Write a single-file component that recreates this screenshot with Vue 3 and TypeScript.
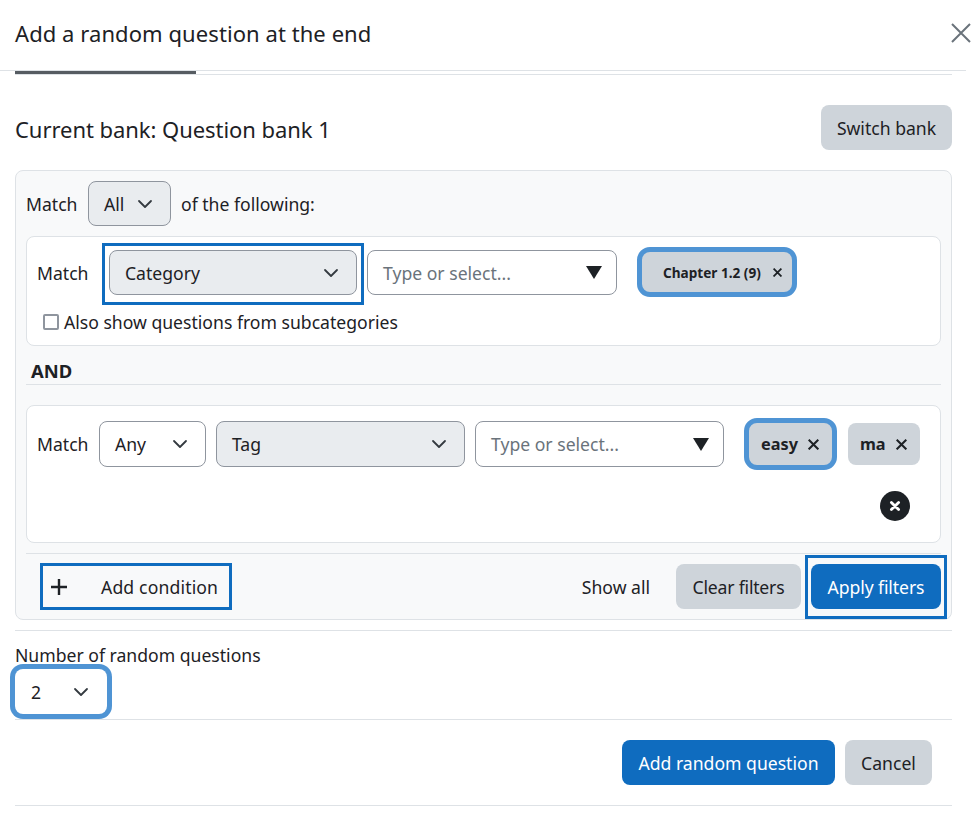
<script setup lang="ts">
const chevron = 'M2 5l6 6 6-6'
const cross = 'M1 1l14 14M15 1L1 15'
</script>

<template>
  <div class="modal">
    <header class="head">
      <h1 class="title">Add a random question at the end</h1>
      <svg class="close" viewBox="0 0 20 20" aria-hidden="true"><path d="M1 1l18 18M19 1L1 19" /></svg>
    </header>
    <div class="body">
      <div class="tabs"><span class="tab"></span></div>
      <div class="bank">
        <span class="bank-name">Current bank: Question bank 1</span>
        <button class="btn sec switch">Switch bank</button>
      </div>
      <section class="panel">
        <div class="match-all">
          <span class="mlabel">Match</span>
          <div class="sel grey all"><span>All</span><svg class="chev" viewBox="0 0 16 16"><path :d="chevron" /></svg></div>
          <span>of the following:</span>
        </div>
        <div class="card card1">
          <div class="row">
            <span class="m m1">Match</span>
            <div class="ring cat-ring">
              <div class="sel grey cat"><span>Category</span><svg class="chev" viewBox="0 0 16 16"><path :d="chevron" /></svg></div>
            </div>
            <div class="sel type t1"><span class="ph">Type or select...</span><span class="tri"></span></div>
            <div class="chip focus chapter"><span>Chapter 1.2 (9)</span><svg class="x xs" viewBox="0 0 16 16"><path :d="cross" /></svg></div>
          </div>
          <label class="check"><span class="box"></span>Also show questions from subcategories</label>
        </div>
        <div class="and">AND</div>
        <div class="card card2">
          <div class="row row2">
            <span class="m m2">Match</span>
            <div class="sel any"><span>Any</span><svg class="chev" viewBox="0 0 16 16"><path :d="chevron" /></svg></div>
            <div class="sel grey tag"><span>Tag</span><svg class="chev" viewBox="0 0 16 16"><path :d="chevron" /></svg></div>
            <div class="sel type t2"><span class="ph">Type or select...</span><span class="tri"></span></div>
            <div class="chip focus easy"><span>easy</span><svg class="x" viewBox="0 0 16 16"><path :d="cross" /></svg></div>
            <div class="chip ma"><span>ma</span><svg class="x" viewBox="0 0 16 16"><path :d="cross" /></svg></div>
          </div>
          <div class="remove-row">
            <span class="remove"><svg viewBox="0 0 16 16"><path d="M4.4 4.4l7.2 7.2M11.6 4.4l-7.2 7.2" /></svg></span>
          </div>
        </div>
        <div class="foot">
          <div class="add"><svg viewBox="0 0 16 16"><path d="M8 0v16M0 8h16" /></svg><span>Add condition</span></div>
          <span class="show">Show all</span>
          <button class="btn sec clear">Clear filters</button>
          <div class="ring apply-ring"><button class="btn pri apply">Apply filters</button></div>
        </div>
      </section>
      <div class="number">
        <div class="num-label">Number of random questions</div>
        <div class="sel num"><span>2</span><svg class="chev" viewBox="0 0 16 16"><path :d="chevron" /></svg></div>
      </div>
      <div class="actions">
        <button class="btn pri addq">Add random question</button>
        <button class="btn sec cancel">Cancel</button>
      </div>
    </div>
  </div>
</template>

<style>
html, body { margin: 0; background: #fff; }
</style>

<style scoped>
.modal {
  width: 971px; height: 833px; overflow: hidden; background: #fff; box-sizing: border-box;
  font-family: "Noto Sans", "Open Sans", sans-serif; font-size: 17.6px; color: #1d2125;
}
.head {
  height: 71px; box-sizing: border-box; width: 966px; border-bottom: 1px solid #dee2e6;
  padding: 0 0 0 15px; display: flex; align-items: center; justify-content: space-between; position: relative;
}
.title { margin: 0 0 3px; font-size: 22px; font-weight: 400; line-height: 1.2; letter-spacing: .07px; white-space: nowrap; }
.close { position: absolute; left: 951px; top: 23px; width: 20px; height: 20px; }
.close path { fill: none; stroke: #6a737b; stroke-width: 2; }
.body { padding: 0 19px 0 15px; }
.tabs { height: 3px; border-bottom: 1px solid #dee2e6; }
.tab { display: block; width: 181px; height: 3px; background: #565c62; }
.bank { display: flex; justify-content: space-between; align-items: center; margin-top: 30px; height: 45px; }
.bank-name { font-size: 22px; letter-spacing: -.05px; margin-top: 2px; white-space: nowrap; }
.btn {
  font: inherit; height: 45px; box-sizing: border-box; border: 0; border-radius: 8px; padding: 2px 16px 0; color: #1d2125; white-space: nowrap; line-height: 1;
}
.sec { background: #ced4da; }
.pri { background: #0f6cbf; color: #fff; }
.switch { width: 131px; padding: 2px 0 0; }
.panel {
  margin-top: 20px; height: 450px; box-sizing: border-box; background: #f8f9fa; border: 1px solid #dee2e6; border-radius: 8px;
  padding: 10px 10px 0; display: flex; flex-direction: column;
}
.match-all { display: flex; align-items: center; gap: 10px; height: 45px; padding-left: 0; }
.match-all span { white-space: nowrap; }
.mlabel { width: 52px; box-sizing: border-box; }
.sel {
  height: 45px; box-sizing: border-box; border: 1px solid #8f959e; border-radius: 8px; background: #fff;
  display: flex; align-items: center; justify-content: space-between; padding: 0 17px 0 15px; flex: none;
}
.grey { background: #e9ecef; }
.chev { width: 16px; height: 16px; flex: none; }
.chev path { fill: none; stroke: #343a40; stroke-width: 1.8; stroke-linecap: round; stroke-linejoin: round; }
.all { width: 83px; }
.card { background: #fff; border: 1px solid #dee2e6; border-radius: 8px; box-sizing: border-box; flex: none; }
.card1 { margin-top: 10px; height: 110px; padding: 6px 10px 0; }
.row { display: flex; align-items: flex-start; }
.m { white-space: nowrap; line-height: 45px; flex: none; }
.m1 { width: 65px; margin-top: 8px; }
.ring { border: 3px solid #0f6cbf; box-sizing: border-box; display: flex; flex: none; }
.cat-ring { padding: 4px 4px 7px; width: 262px; height: 62px; margin-right: 3px; }
.cat { width: 248px; }
.t1 { width: 250px; margin: 7px 20px 0 0; }
.t2 { width: 249px; margin: 3px 20px 0 0; }
.type { padding-right: 14px; }
.ph { color: #6a737b; white-space: nowrap; }
.tri {
  width: 0; height: 0; border-left: 8px solid transparent; border-right: 8px solid transparent; border-top: 13px solid #1d2125; flex: none;
}
.chip {
  display: flex; align-items: center; justify-content: space-between; background: #ced4da; border-radius: 8px;
  font-weight: 700; box-sizing: border-box; white-space: nowrap; flex: none;
}
.focus { border: 5px solid #4f94d4; border-radius: 13px; }
.chapter { width: 160px; height: 50px; font-size: 13.6px; padding: 0 10px 0 21px; margin-top: 4px; }
.x { width: 11px; height: 11px; flex: none; }
.x.xs { width: 9px; height: 9px; }
.x path { fill: none; stroke: #1d2125; stroke-width: 3; }
.x.xs path { stroke-width: 3.2; }
.easy { width: 93px; height: 52px; font-size: 16.3px; padding: 0 13px 0 12px; margin-right: 11px; }
.ma { width: 72px; height: 42px; font-size: 16.3px; padding: 0 13px 0 12px; margin-top: 5px; }
.check { display: flex; align-items: center; gap: 5px; margin-top: 4px; height: 26px; white-space: nowrap; }
.box { width: 12px; height: 12px; border: 2px solid #8f959e; border-radius: 2px; background: #fff; flex: none; margin-left: 6px; }
.and { height: 39px; box-sizing: border-box; border-bottom: 1px solid #dee2e6; padding: 15px 0 0 5px; font-weight: 700; font-size: 18.4px; line-height: 20px; flex: none; }
.card2 { margin-top: 20px; height: 138px; padding: 12px 10px 0; }
.m2 { width: 62px; margin-top: 4px; }
.any { width: 107px; margin: 3px 10px 0 0; height: 46px; }
.tag { width: 249px; margin: 3px 10px 0 0; height: 46px; }
.t2 { height: 46px; }
.remove-row { display: flex; justify-content: flex-end; padding: 21px 20px 0 0; }
.remove { width: 30px; height: 30px; background: #1d2125; border-radius: 50%; display: flex; align-items: center; justify-content: center; }
.remove svg { width: 16px; height: 16px; }
.remove path { fill: none; stroke: #fff; stroke-width: 2.8; stroke-linecap: round; }
.foot { margin-top: 10px; height: 66px; border-top: 1px solid #dee2e6; box-sizing: border-box; display: flex; align-items: flex-start; flex: none; }
.add {
  width: 192px; height: 47px; box-sizing: border-box; border: 3px solid #0f6cbf; display: flex; align-items: center;
  margin: 9px 0 0 14px; padding-left: 8px; flex: none;
}
.add svg { width: 16px; height: 16px; margin-right: 34px; flex: none; }
.add path { stroke: #1d2125; stroke-width: 2.4; fill: none; }
.add span { white-space: nowrap; letter-spacing: .15px; }
.show { margin: 11px 26px 0 auto; line-height: 45px; white-space: nowrap; }
.clear { width: 125px; padding: 2px 0 0; margin: 10px 4px 0 0; letter-spacing: -.2px; }
.apply-ring { width: 142px; height: 64px; padding: 6px 3px 7px; margin: 1px -6px 0 0; }
.apply { width: 130px; padding: 2px 0 0; letter-spacing: -.1px; }
.number { height: 90px; margin-top: 10px; border-top: 1px solid #dee2e6; border-bottom: 1px solid #dee2e6; box-sizing: border-box; padding-top: 11px; }
.num-label { line-height: 26px; white-space: nowrap; }
.num { width: 92px; border: 0; border-radius: 8px; padding: 0 18px 0 16px; box-shadow: 0 0 0 5px #4f94d4; margin-top: 1px; }
.actions { height: 86px; border-bottom: 1px solid #dee2e6; box-sizing: border-box; display: flex; justify-content: flex-end; align-items: flex-start; gap: 10px; padding: 20px 20px 0 0; }
.addq { width: 213px; padding: 2px 0 0; }
.cancel { width: 87px; padding: 2px 0 0; }
</style>
